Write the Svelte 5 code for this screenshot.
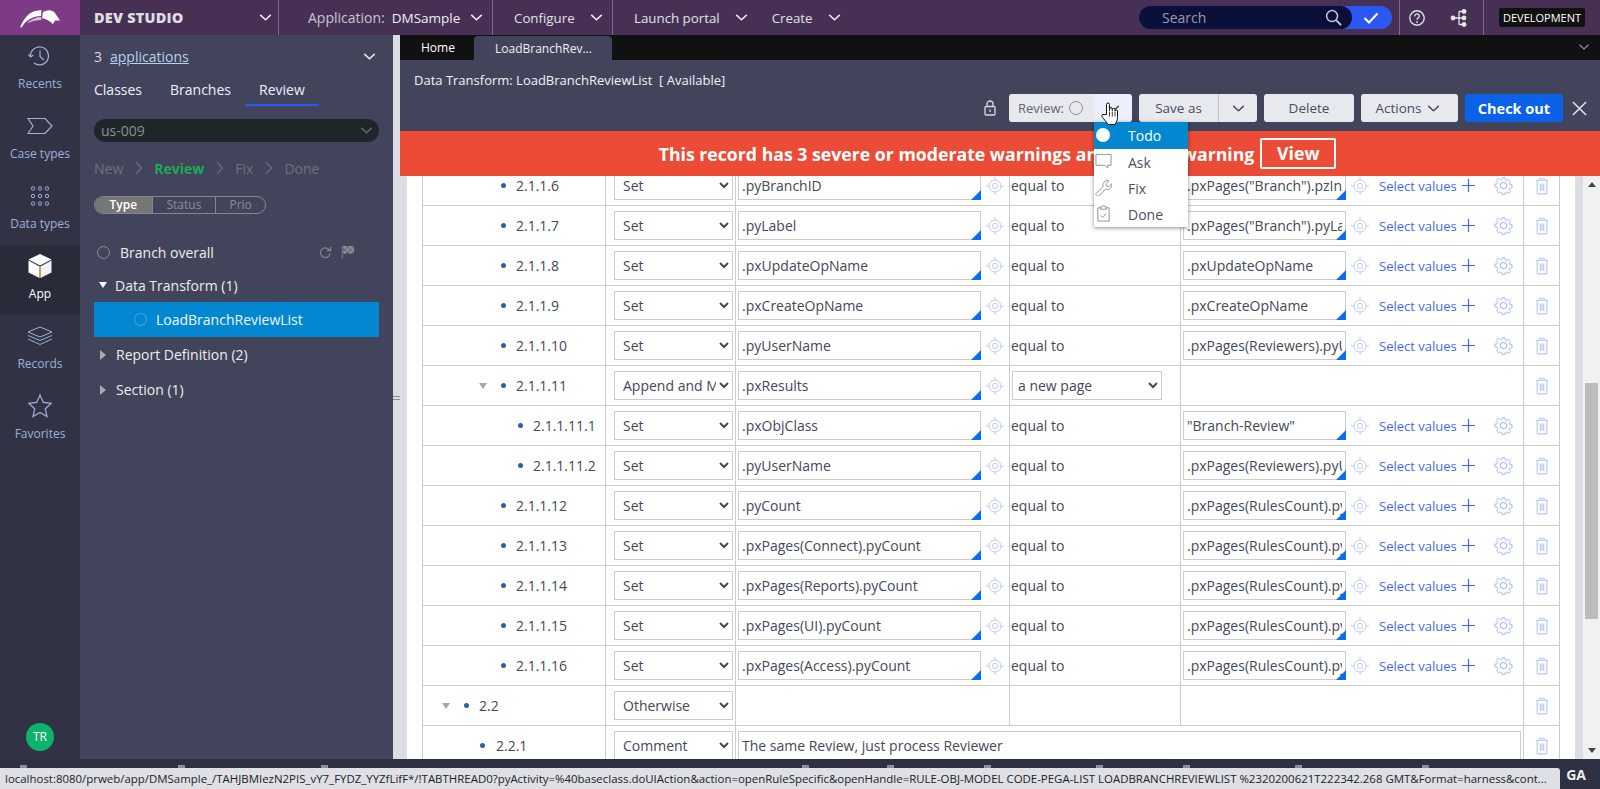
<script>
  const rows = [
    { n: '2.1.1.6', lv: 'l3', op: 'Set', t: '.pyBranchID', v: '.pxPages("Branch").pzInsKey' },
    { n: '2.1.1.7', lv: 'l3', op: 'Set', t: '.pyLabel', v: '.pxPages("Branch").pyLabel' },
    { n: '2.1.1.8', lv: 'l3', op: 'Set', t: '.pxUpdateOpName', v: '.pxUpdateOpName' },
    { n: '2.1.1.9', lv: 'l3', op: 'Set', t: '.pxCreateOpName', v: '.pxCreateOpName' },
    { n: '2.1.1.10', lv: 'l3', op: 'Set', t: '.pyUserName', v: '.pxPages(Reviewers).pyUserName' },
    { n: '2.1.1.11', lv: 'l3', op: 'Append and Map to', t: '.pxResults', page: true, tri: true },
    { n: '2.1.1.11.1', lv: 'l4', op: 'Set', t: '.pxObjClass', v: '"Branch-Review"' },
    { n: '2.1.1.11.2', lv: 'l4', op: 'Set', t: '.pyUserName', v: '.pxPages(Reviewers).pyUserName' },
    { n: '2.1.1.12', lv: 'l3', op: 'Set', t: '.pyCount', v: '.pxPages(RulesCount).pyCount' },
    { n: '2.1.1.13', lv: 'l3', op: 'Set', t: '.pxPages(Connect).pyCount', v: '.pxPages(RulesCount).pyCount' },
    { n: '2.1.1.14', lv: 'l3', op: 'Set', t: '.pxPages(Reports).pyCount', v: '.pxPages(RulesCount).pyCount' },
    { n: '2.1.1.15', lv: 'l3', op: 'Set', t: '.pxPages(UI).pyCount', v: '.pxPages(RulesCount).pyCount' },
    { n: '2.1.1.16', lv: 'l3', op: 'Set', t: '.pxPages(Access).pyCount', v: '.pxPages(RulesCount).pyCount' },
    { n: '2.2', lv: 'l1', op: 'Otherwise', tri: true, bare: true },
    { n: '2.2.1', lv: 'l2', op: 'Comment', comment: 'The same Review, just process Reviewer' }
  ];
  const status = 'localhost:8080/prweb/app/DMSample_/TAHJBMIezN2PIS_vY7_FYDZ_YYZfLifF*/!TABTHREAD0?pyActivity=%40baseclass.doUIAction&action=openRuleSpecific&openHandle=RULE-OBJ-MODEL CODE-PEGA-LIST LOADBRANCHREVIEWLIST %2320200621T222342.268 GMT&Format=harness&cont...';
  const marks = [20, 178, 321, 802, 887, 984, 1096, 1183, 1295, 1422];
</script>

{#snippet chev(cls)}
  <svg class={'chev ' + cls} viewBox="0 0 14 8" aria-hidden="true"><path d="M1 1l6 5.500L13 1" fill="none" stroke="currentColor" stroke-width="1.700"/></svg>
{/snippet}

{#snippet target()}
  <svg class="target" viewBox="0 0 18 18" aria-hidden="true"><g fill="none" stroke="#bfcaf5" stroke-width="1"><circle cx="9" cy="9" r="6"/><circle cx="9" cy="9" r="2.600"/><path d="M9 0v3M9 15v3M0 9h3M15 9h3"/></g></svg>
{/snippet}

{#snippet trash()}
  <svg class="trash" viewBox="0 0 16 20" aria-hidden="true"><g fill="none" stroke="#b5c3f3" stroke-width="1.200"><path d="M1 3.500h14M5.500 3.500V1.200h5v2.300M2.500 3.500v14.200q0 1.300 1.300 1.300h8.400q1.300 0 1.300-1.300V3.500"/><path d="M6 7v8.500M8 7v8.500M10 7v8.500"/></g></svg>
{/snippet}

{#snippet gear()}
  <svg class="gear" viewBox="0 0 20 20" aria-hidden="true"><g fill="none" stroke="#a3b2f2" stroke-width="1.100"><circle cx="10" cy="10" r="3.200"/><path d="M8.400 1h3.200l.5 2.600 1.700.7 2.200-1.500 2.200 2.200-1.500 2.200.7 1.700 2.600.5v3.200l-2.600.5-.7 1.700 1.500 2.200-2.200 2.200-2.200-1.500-1.700.7-.5 2.400H8.400l-.5-2.400-1.700-.7L4 18.100l-2.200-2.200 1.500-2.200-.7-1.700L0 11.500V8.400l2.600-.5.7-1.700-1.500-2.200L4 1.800l2.200 1.500 1.700-.7z" transform="translate(1 1) scale(.9)"/></g></svg>
{/snippet}

<div class="app">
  <header class="top">
    <div class="logo">
      <svg viewBox="0 0 80 35" aria-hidden="true"><path d="M20 27.500C23 20 28 13 35 11l6.500-1-.5 6c-8 0-15 4-19 11z" fill="#fff"/><path d="M28 22c4-3 9-5 13-5l.5 3c-5 0-9.500 1-13.500 3z" fill="#d9c3dd"/><path d="M43 12c4-2 9-3 12 1l5 7.500h-5l-2 3.500c-3-3-7-5-11-6z" fill="#fff"/></svg>
    </div>
    <div class="studio"><b>DEV STUDIO</b>{@render chev('c-studio')}</div>
    <div class="nav app-nav"><span class="dim">Application:</span><span class="appname">DMSample</span>{@render chev('')}</div>
    <div class="nav conf"><span>Configure</span>{@render chev('')}</div>
    <div class="nav launch"><span>Launch portal</span>{@render chev('')}<span class="create">Create</span>{@render chev('')}</div>
    <div class="search">
      <div class="search-box"><span>Search</span>
        <svg viewBox="0 0 18 18" aria-hidden="true"><circle cx="7.500" cy="7.500" r="5.800" fill="none" stroke="#c7c9d2" stroke-width="1.600"/><path d="M12 12l5 5" stroke="#c7c9d2" stroke-width="2"/></svg>
      </div>
      <svg class="check" viewBox="0 0 16 12" aria-hidden="true"><path d="M1.500 6l4.500 4.500L14.500 1.500" fill="none" stroke="#fff" stroke-width="2"/></svg>
    </div>
    <div class="tools">
      <svg viewBox="0 0 20 20" aria-hidden="true"><circle cx="10" cy="10" r="8" fill="none" stroke="#e6e6ec" stroke-width="1.500"/><path d="M7.500 8a2.500 2.500 0 1 1 3.600 2.200c-.8.400-1.100.9-1.100 1.800" fill="none" stroke="#e6e6ec" stroke-width="1.500"/><circle cx="10" cy="14.500" r="1" fill="#e6e6ec"/></svg>
      <svg viewBox="0 0 18 18" aria-hidden="true"><g fill="#e6e6ec"><circle cx="3" cy="9" r="2.400"/><circle cx="14" cy="2.500" r="2.400"/><circle cx="14" cy="9" r="2.400"/><circle cx="14" cy="15.500" r="2.400"/></g><path d="M3 9h11M9 2.500v13M9 2.500h5M9 15.500h5" stroke="#e6e6ec" stroke-width="1.300" fill="none"/></svg>
    </div>
    <div class="env"><span>DEVELOPMENT</span></div>
  </header>

  <div class="body">
    <nav class="rail">
      <div class="rail-item">
        <svg viewBox="0 0 24 24" aria-hidden="true"><g fill="none" stroke="#9fb0dc" stroke-width="1.200"><path d="M2.500 12.500A9 9 0 1 1 6 19"/><path d="M12 6.500V12.500l4 3.500"/><path d="M.5 10.500l2.200 2.500 2.600-2"/></g></svg>
        <span>Recents</span>
      </div>
      <div class="rail-item">
        <svg class="wide" viewBox="0 0 26 17" aria-hidden="true"><path d="M1 1h17l7 7.500L18 16H1l5-7.500z" fill="none" stroke="#9fb0dc" stroke-width="1.200"/></svg>
        <span>Case types</span>
      </div>
      <div class="rail-item">
        <svg viewBox="0 0 24 24" aria-hidden="true"><g fill="none" stroke="#9fb0dc" stroke-width="1"><circle cx="5" cy="4.500" r="1.700"/><circle cx="12" cy="4.500" r="1.700"/><circle cx="19" cy="4.500" r="1.700"/><circle cx="5" cy="12" r="1.700"/><circle cx="12" cy="12" r="1.700"/><circle cx="19" cy="12" r="1.700"/><circle cx="5" cy="19.500" r="1.700"/><circle cx="12" cy="19.500" r="1.700"/><circle cx="19" cy="19.500" r="1.700"/></g></svg>
        <span>Data types</span>
      </div>
      <div class="rail-item active">
        <svg viewBox="0 0 24 24" aria-hidden="true"><path d="M12 0l11.500 5.500L12 11.500.5 5.500z" fill="#fff"/><path d="M.5 6.500L11.500 12.500V24L.5 18.500z" fill="#fff"/><path d="M12.500 12.500L23.500 6.500v12L12.500 24z" fill="#f2f2f6"/><path d="M12 12v12" stroke="#f0a94a" stroke-width="1"/></svg>
        <span>App</span>
      </div>
      <div class="rail-item">
        <svg class="wide" viewBox="0 0 26 20" aria-hidden="true"><g fill="none" stroke="#9fb0dc" stroke-width="1"><path d="M13 1l12 5-12 5L1 6z"/><path d="M1 9.500l12 5 12-5M1 13l12 5.500L25 13"/></g></svg>
        <span>Records</span>
      </div>
      <div class="rail-item">
        <svg viewBox="0 0 24 24" aria-hidden="true"><path d="M12 1l3.300 7.400 8 .9-6 5.400 1.700 7.900-7-4.100-7 4.100 1.700-7.900-6-5.400 8-.9z" fill="none" stroke="#9fb0dc" stroke-width="1.200"/></svg>
        <span>Favorites</span>
      </div>
      <div class="avatar">TR</div>
    </nav>

    <aside class="panel">
      <div class="apps"><span>3</span><a href="#apps">applications</a>{@render chev('c-apps')}</div>
      <div class="ptabs"><span>Classes</span><span>Branches</span><span class="on">Review</span></div>
      <div class="us"><span>us-009</span>{@render chev('c-us')}</div>
      <div class="steps">
        <span>New</span><svg viewBox="0 0 8 14" aria-hidden="true"><path d="M1 1l5.500 6L1 13" fill="none" stroke="#6b6e7e" stroke-width="1.300"/></svg>
        <b>Review</b><svg viewBox="0 0 8 14" aria-hidden="true"><path d="M1 1l5.500 6L1 13" fill="none" stroke="#6b6e7e" stroke-width="1.300"/></svg>
        <span>Fix</span><svg viewBox="0 0 8 14" aria-hidden="true"><path d="M1 1l5.500 6L1 13" fill="none" stroke="#6b6e7e" stroke-width="1.300"/></svg>
        <span>Done</span>
      </div>
      <div class="toggle"><b>Type</b><span>Status</span><span>Prio</span></div>
      <div class="overall">
        <i class="ring"></i><span>Branch overall</span>
        <svg class="reload" viewBox="0 0 14 14" aria-hidden="true"><path d="M12 8a5.200 5.200 0 1 1-1.500-4.500L12.500 5M12.500 1v4h-4" fill="none" stroke="#82848f" stroke-width="1.300"/></svg>
        <svg class="flag" viewBox="0 0 14 16" aria-hidden="true"><path d="M1 1v14" stroke="#6b6d78" stroke-width="1.500"/><path d="M2 1h11.500v8H2z" fill="#6b6d78"/><path d="M2 1h3v2.700H2zM8 1h3v2.700H8zM5 3.700h3v2.700H5zM11 3.700h2.500v2.700H11zM2 6.400h3V9H2zM8 6.400h3V9H8z" fill="#8d8f98"/></svg>
      </div>
      <div class="tree open"><i class="tri down"></i>Data Transform (1)</div>
      <div class="leaf"><i class="ring thin"></i>LoadBranchReviewList</div>
      <div class="tree"><i class="tri right"></i>Report Definition (2)</div>
      <div class="tree"><i class="tri right"></i>Section (1)</div>
    </aside>

    <div class="split"><i></i><i></i></div>

    <main class="main">
      <div class="tabs">
        <span class="home">Home</span>
        <span class="tab">LoadBranchRev...</span>
        {@render chev('c-tabs')}
      </div>
      <div class="head">
        <div class="title">Data Transform: LoadBranchReviewList&nbsp; [ Available]</div>
        <div class="actions">
          <svg class="lock" viewBox="0 0 12 16" aria-hidden="true"><g fill="none" stroke="#d8d9e0" stroke-width="1.300"><rect x="1" y="6.500" width="10" height="8.500" rx="1"/><path d="M3 6.500V4a3 3 0 0 1 6 0v2.500"/><path d="M6 9.500v2.500"/></g></svg>
          <div class="btn review"><span>Review:</span><i class="ring grey"></i></div>
          <div class="btn rchev">{@render chev('c-dark')}</div>
          <div class="btn save"><span>Save as</span></div>
          <div class="btn schev">{@render chev('c-dark')}</div>
          <div class="btn delete">Delete</div>
          <div class="btn act">Actions{@render chev('c-dark')}</div>
          <div class="checkout">Check out</div>
          <svg class="close" viewBox="0 0 16 16" aria-hidden="true"><path d="M1 1l14 14M15 1L1 15" stroke="#e6e6ec" stroke-width="1.600"/></svg>
        </div>
      </div>
      <div class="banner">
        <span>This record has 3 severe or moderate warnings and 1 other warning</span>
        <span class="view">View</span>
      </div>

      <div class="content">
        <div class="gutter"></div>
        <div class="sheet">
          <div class="table">
            {#each rows as r}
              <div class="row">
                <div class={'c c1 ' + r.lv}>
                  {#if r.tri}<i class="tri down small"></i>{/if}
                  <i class="dot"></i><span>{r.n}</span>
                </div>
                <div class="c c2">
                  <select><option>{r.op}</option></select>
                </div>
                {#if r.comment}
                  <div class="c cwide"><input class="cmt" value={r.comment} /></div>
                {:else if r.bare}
                  <div class="c c3"></div><div class="c c4"></div><div class="c c5"></div>
                {:else}
                  <div class="c c3">
                    <span class="inp"><input class="big" value={r.t} /></span>
                    {@render target()}
                  </div>
                  <div class="c c4">
                    {#if r.page}
                      <select class="pg"><option>a new page</option></select>
                    {:else}
                      equal to
                    {/if}
                  </div>
                  <div class="c c5">
                    {#if !r.page}
                      <span class="inp"><input class="small-in" value={r.v} /></span>
                      {@render target()}
                      <span class="sel">Select values</span>
                      <svg class="plus" viewBox="0 0 14 14" aria-hidden="true"><path d="M7 0v14M0 7h14" stroke="#3f6af0" stroke-width="1.300"/></svg>
                      {@render gear()}
                    {/if}
                  </div>
                {/if}
                <div class="c c6">{@render trash()}</div>
              </div>
            {/each}
          </div>
        </div>
        <div class="sb">
          <i class="up"></i>
          <div class="thumb"></div>
          <i class="dn"></i>
        </div>
      </div>
    </main>
  </div>

  <div class="foot">
    {#each marks as m}<i class="mark" style={`left:${m}px`}></i>{/each}
    <span>GA</span>
  </div>

  <div class="menu">
    <div class="mi on"><i class="blob"></i>Todo</div>
    <div class="mi">
      <svg viewBox="0 0 18 17" aria-hidden="true"><path d="M1 1h16v11.500h-3.500v3l-3-3H1z" fill="none" stroke="#8a8d99" stroke-width="1"/></svg>Ask
    </div>
    <div class="mi">
      <svg viewBox="0 0 18 18" aria-hidden="true"><path d="M1 15.500l7.500-7.500c-.7-2.300.2-4.500 2.200-5.700 1.300-.8 2.800-.9 4-.4l-3 3 .4 2.700 2.700.4 3-3c.3 2.500-.7 4.500-2.700 5.500-1.300.6-2.600.7-3.800.2L4 18c-1 .8-3.800-.8-3-2.500z" fill="none" stroke="#8a8d99" stroke-width="1"/></svg>Fix
    </div>
    <div class="mi">
      <svg viewBox="0 0 14 18" aria-hidden="true"><g fill="none" stroke="#8a8d99" stroke-width="1"><path d="M4 3H1v14h12V3h-3"/><path d="M4 4.500V2h1.500a1.500 1.500 0 0 1 3 0H10v2.500z"/><path d="M4 11l2 2 4-4"/></g></svg>Done
    </div>
  </div>

  <svg class="hand" viewBox="0 0 18 24" aria-hidden="true"><path d="M5.500 13V3a1.500 1.500 0 0 1 3 0v6l0-1.500a1.400 1.400 0 0 1 2.800 0V9l0-1a1.400 1.400 0 0 1 2.700 0v1.500a1.300 1.300 0 0 1 2.500 0V16c0 3-1.500 5-2.500 7H7c-1-2-4-5-6-8-.8-1.300.8-2.800 2-1.800z" fill="#fff" stroke="#111" stroke-width="1"/><path d="M8.500 10v5M11.300 10v5M14 10v5" stroke="#111" stroke-width=".8"/></svg>

  <div class="status">{status}</div>
</div>

<style>
  :global(body) { margin: 0; overflow: hidden; background: #41445a; }
  .app {
    width: 1600px; height: 789px; position: relative; overflow: hidden;
    display: flex; flex-direction: column;
    font-family: "Open Sans", "Liberation Sans", sans-serif; font-size: 14px; color: #fff;
  }
  .top { height: 35px; flex: none; display: flex; align-items: stretch; background: #463155; color: #e2e0e8; font-size: 13.300px; }
  .logo { width: 80px; flex: none; background: #7d3a85; display: flex; }
  .logo svg { width: 80px; height: 35px; }
  .chev { display: block; width: 13px; height: 7px; flex: none; color: #eee; }
  .studio { width: 199px; box-sizing: border-box; padding-left: 14px; flex: none; display: flex; align-items: center; border-right: 1px solid #7b6a88; }
  .studio b { font-size: 14.500px; font-weight: 800; color: #dfdde3; letter-spacing: .2px; }
  .c-studio { margin-left: 75px; }
  .nav { display: flex; align-items: center; }
  .app-nav { width: 214px; box-sizing: border-box; padding-left: 29px; border-right: 1px solid #7b6a88; }
  .dim { color: #c8c6d0; font-size: 14px; }
  .appname { margin-left: 7px; color: #eee; font-size: 13.500px; }
  .app-nav .chev { margin-left: 10px; }
  .conf { width: 120px; box-sizing: border-box; padding-left: 21px; border-right: 1px solid #7b6a88; }
  .conf .chev { margin-left: 15px; }
  .launch { padding-left: 21px; width: 526px; box-sizing: border-box; }
  .launch .chev { margin-left: 15px; }
  .create { margin-left: 24px; }
  .search { width: 253px; margin-top: 6px; height: 23px; border-radius: 12px; background: #2b57f5; position: relative; flex: none; }
  .search-box { width: 213px; height: 23px; border-radius: 12px; background: #0a1039; display: flex; align-items: center; justify-content: space-between; box-sizing: border-box; padding: 0 10px 0 23px; color: #9a9db0; font-size: 14px; }
  .search-box svg { width: 17px; height: 17px; }
  .check { position: absolute; right: 13px; top: 6px; width: 16px; height: 12px; }
  .tools { margin-left: 7px; width: 85px; box-sizing: border-box; border-left: 1px solid #7b6a88; border-right: 1px solid #7b6a88; display: flex; align-items: center; gap: 24px; padding-left: 8px; }
  .tools svg { width: 18px; height: 18px; flex: none; }
  .env { padding-left: 15px; display: flex; align-items: center; }
  .env span { background: #111; border-radius: 2px; font-size: 11px; color: #fff; height: 19px; line-height: 19px; width: 86px; text-align: center; }

  .body { flex: 1; display: flex; min-height: 0; }
  .rail { width: 80px; flex: none; background: #313345; display: flex; flex-direction: column; position: relative; }
  .rail-item { height: 70px; display: flex; flex-direction: column; align-items: center; color: #9fb0dc; font-size: 12px; padding-top: 9px; box-sizing: border-box; }
  .rail-item svg { width: 24px; height: 24px; margin-bottom: 7px; flex: none; }
  .rail-item svg.wide { width: 26px; height: 24px; }
  .rail-item.active { background: #292b39; color: #fff; }
  .avatar { position: absolute; left: 26px; top: 688px; width: 28px; height: 28px; border-radius: 50%; background: #0db26b; color: #fff; font-size: 12px; line-height: 28px; text-align: center; }

  .panel { width: 313px; flex: none; background: #41445a; box-sizing: border-box; padding: 10px 14px 0; }
  .apps { display: flex; align-items: center; height: 22px; font-size: 14px; color: #d7d9e6; }
  .apps a { color: #b9d0ec; margin-left: 8px; }
  .c-apps { margin-left: auto; margin-right: 2px; width: 15px; }
  .ptabs { display: flex; margin-top: 13px; height: 40px; font-size: 14px; color: #eef; }
  .ptabs span { padding: 0 14px; box-sizing: border-box; line-height: 20px; }
  .ptabs span:first-child { padding-left: 0; padding-right: 28px; }
  .ptabs span:nth-child(2) { padding-left: 0; padding-right: 14px; }
  .ptabs .on { border-bottom: 2px solid #2b57f5; height: 26px; width: 74px; }
  .us { margin-top: -1px; height: 23px; width: 285px; border-radius: 12px; background: #1f2629; display: flex; align-items: center; padding-left: 7px; box-sizing: border-box; color: #8a8e96; font-size: 14px; }
  .c-us { margin-left: auto; margin-right: 6px; color: #5f6468; }
  .steps { display: flex; align-items: center; margin-top: 16px; height: 20px; color: #6e7182; font-size: 14px; }
  .steps svg { width: 8px; height: 14px; margin: 0 11.500px; }
  .steps b { color: #1eab55; font-weight: 700; }
  .toggle { display: flex; margin-top: 18px; width: 172px; height: 18px; border: 1px solid #85878f; border-radius: 9px; box-sizing: border-box; font-size: 12px; color: #8a8c99; overflow: hidden; line-height: 16px; text-align: center; }
  .toggle b { width: 57px; background: #777; color: #fff; font-weight: 600; }
  .toggle span { width: 64px; border-left: 1px solid #85878f; box-sizing: border-box; }
  .toggle span:last-child { width: 50px; }
  .overall { display: flex; align-items: center; margin-top: 28px; height: 20px; font-size: 14px; color: #eee; }
  .ring { width: 11px; height: 11px; border: 1.500px solid #8d8f9a; border-radius: 50%; display: block; flex: none; }
  .overall .ring { margin: 0 10px 0 3px; }
  .reload { width: 13px; height: 13px; margin-left: 105px; }
  .flag { width: 14px; height: 15px; margin-left: 9px; }
  .tree { height: 35px; display: flex; align-items: center; font-size: 14px; color: #eee; }
  .overall + .tree { margin-top: 6px; height: 34px; }
  .tri { display: block; width: 0; height: 0; flex: none; }
  .tri.down { border-left: 4.500px solid transparent; border-right: 4.500px solid transparent; border-top: 6px solid #fff; margin: 0 8px 0 5px; }
  .tri.right { border-top: 5px solid transparent; border-bottom: 5px solid transparent; border-left: 6px solid #aaa; margin: 0 10px 0 6px; }
  .leaf { height: 35px; background: #0387d0; display: flex; align-items: center; font-size: 14px; color: #f2f6fa; }
  .ring.thin { border-color: #4fa8dd; width: 11px; height: 11px; margin: 0 9px 0 40px; }

  .split { width: 7px; flex: none; background: #dcdde2; display: flex; flex-direction: column; gap: 2px; padding-top: 361px; box-sizing: border-box; }
  .split i { display: block; height: 1px; background: #8c8e98; }

  .main { flex: 1; min-width: 0; display: flex; flex-direction: column; position: relative; background: #fff; }
  .tabs { height: 25px; flex: none; background: #111; display: flex; align-items: flex-end; font-size: 12px; position: relative; }
  .home { width: 74px; padding-left: 21px; box-sizing: border-box; line-height: 24px; align-self: center; }
  .tab { width: 138px; height: 24px; background: #41445a; border-radius: 4px 4px 0 0; padding-left: 21px; box-sizing: border-box; line-height: 25px; color: #f0f0f5; }
  .c-tabs { position: absolute; right: 10px; top: 9px; color: #8e9098; width: 12px; height: 6px; }
  .head { height: 71px; flex: none; background: #41445a; box-sizing: border-box; padding: 11px 0 0 14px; font-size: 13px; color: #f2f2f6; }
  .title { line-height: 18px; }
  .actions { display: flex; align-items: center; margin-top: 5px; height: 28px; }
  .lock { width: 12px; height: 16px; margin-left: 570px; }
  .btn { height: 28px; background: #e8e9ee; color: #4a4d5c; display: flex; align-items: center; justify-content: center; font-size: 14px; box-sizing: border-box; }
  .review { width: 85px; margin-left: 13px; border-radius: 3px 0 0 3px; font-size: 13px; color: #62656f; padding-right: 2px; }
  .ring.grey { margin-left: 5px; border-width: 1px; width: 12px; height: 12px; }
  .rchev { width: 38px; background: #edf0fb; border-radius: 0 3px 3px 0; }
  .c-dark { color: #4a4d5c; }
  .save { width: 80px; margin-left: 7px; border-radius: 3px 0 0 3px; border-right: 1px solid #c4c5cc; font-size: 13.500px; }
  .schev { width: 38px; border-radius: 0 3px 3px 0; }
  .delete { width: 90px; margin-left: 7px; border-radius: 3px; font-size: 13.500px; }
  .act { width: 97px; margin-left: 7px; border-radius: 3px; gap: 5px; font-size: 13.500px; padding-right: 4px; }
  .checkout { width: 98px; margin-left: 7px; height: 28px; background: #0b62e8; color: #fff; font-weight: 700; font-size: 14.500px; border-radius: 3px; display: flex; align-items: center; justify-content: center; }
  .close { width: 15px; height: 15px; margin-left: 9px; }
  .banner { height: 45px; flex: none; background: #ec4c36; display: flex; align-items: center; justify-content: center; gap: 6px; font-weight: 700; font-size: 17.700px; color: #fff; padding-right: 5px; box-sizing: border-box; }
  .view { border: 2px solid #fff; border-radius: 2px; width: 76px; height: 31px; box-sizing: border-box; text-align: center; line-height: 27px; }

  .content { flex: 1; min-height: 0; display: flex; overflow: hidden; }
  .gutter { width: 7px; flex: none; background: #dcdde2; }
  .sheet { width: 1168px; flex: none; overflow: hidden; box-sizing: border-box; padding-left: 15px; background: #fff; }
  .table { width: 1138px; margin-top: -10px; border-left: 1px solid #ccc; border-right: 1px solid #ccc; box-sizing: border-box; }
  .row { height: 40px; display: grid; grid-template-columns: 183px 130px 274px 171px 343px 1fr; border-bottom: 1px solid #ccc; box-sizing: border-box; color: #444857; font-size: 14px; }
  .c { display: flex; align-items: center; border-right: 1px solid #ccc; box-sizing: border-box; position: relative; }
  .c6 { border-right: 0; justify-content: center; }
  .c1.l1 { padding-left: 41px; }
  .c1.l2 { padding-left: 57px; }
  .c1.l3 { padding-left: 78px; }
  .c1.l4 { padding-left: 95px; }
  .c1.l2 .dot { margin-right: 11px; }
  .c1.l1 .dot { margin-right: 10px; }
  .c1.l3 .dot, .c1.l4 .dot { margin-right: 10px; }
  .c1 .tri.small { position: absolute; border-top-color: #a9a9ad; margin: 0; }
  .c1.l3 .tri.small { left: 56px; }
  .c1.l1 .tri.small { left: 19px; }
  .dot { display: block; width: 5px; height: 5px; background: #2a62a8; border-radius: 50%; flex: none; }
  select { font: 14px "Open Sans", "Liberation Sans", sans-serif; color: #444857; background: #fff; border: 1px solid #ccc; border-radius: 0; height: 29px; width: 119px; margin-left: 8px; padding-left: 4px; outline: 0; }
  input { font: 14px "Open Sans", "Liberation Sans", sans-serif; color: #444857; background: #fff; border: 1px solid #ccc; border-radius: 0; height: 29px; box-sizing: border-box; padding: 0 3px; outline: 0; margin: 0; display: block; }
  .inp { display: block; position: relative; margin-left: 2px; }
  .inp::after { content: ""; position: absolute; right: 0; bottom: 0; width: 0; height: 0; border-left: 10px solid transparent; border-bottom: 10px solid #0a6df0; }
  .big { width: 243px; }
  .small-in { width: 163px; }
  .target { width: 18px; height: 18px; margin-left: 5px; flex: none; }
  .c4 { padding-left: 1px; }
  .pg { width: 150px; margin-left: 1px; padding-left: 1px; }
  .c5 { white-space: nowrap; }
  .sel { color: #3f6af0; font-size: 13px; margin-left: 10px; }
  .plus { width: 13px; height: 13px; margin-left: 5px; flex: none; }
  .gear { width: 19px; height: 19px; margin-left: 19px; flex: none; }
  .trash { width: 14px; height: 18px; }
  .cwide { grid-column: 3 / 6; padding-left: 2px; }
  .cmt { width: 783px; }
  .sb { flex: 1; position: relative; background: #f1f1f3; border-left: 8px solid #dcdde2; }
  .thumb { position: absolute; left: 2px; right: 2px; top: 207px; height: 236px; background: #bcbcbe; }
  .up, .dn { position: absolute; left: 5px; width: 0; height: 0; border-left: 4px solid transparent; border-right: 4px solid transparent; }
  .up { top: 6px; border-bottom: 5px solid #444; }
  .dn { bottom: 6px; border-top: 5px solid #444; }
  .foot { height: 30px; flex: none; background: #2f3142; text-align: right; padding-right: 14px; box-sizing: border-box; font-weight: 700; font-size: 14px; line-height: 32px; overflow: hidden; color: #eee; position: relative; }
  .mark { position: absolute; top: 6px; width: 7px; height: 3px; background: #8d8f9c; }

  .menu { position: absolute; left: 1094px; top: 122px; width: 94px; height: 105px; background: #fff; box-shadow: 0 1px 4px rgba(0,0,0,.45); color: #4d505f; font-size: 14px; }
  .mi { height: 26px; display: flex; align-items: center; padding-left: 34px; position: relative; }
  .mi.on { height: 27px; background: #0387d0; color: #fff; }
  .mi svg { position: absolute; left: 1px; top: 4px; width: 17px; height: 17px; }
  .blob { position: absolute; left: 2px; top: 6px; width: 14px; height: 14px; background: #fff; border-radius: 50%; }
  .hand { position: absolute; left: 1101px; top: 101px; width: 18px; height: 25px; }
  .status { position: absolute; left: 0; bottom: 0; width: 1560px; height: 21px; background: #dee0e5; color: #222; font-size: 11.450px; line-height: 21px; padding-left: 5px; box-sizing: border-box; white-space: nowrap; overflow: hidden; border-radius: 0 3px 0 0; }
</style>
